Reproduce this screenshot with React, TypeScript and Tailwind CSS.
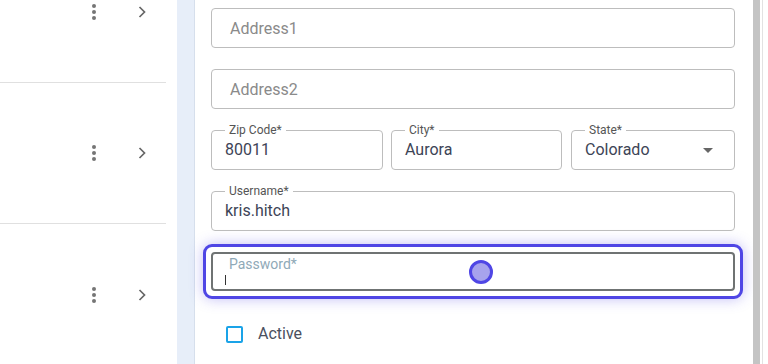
import React from "react"

function Kebab() {
  return (
    <div className="flex flex-col items-center gap-[2px]">
      <span className="block w-[4px] h-[4px] rounded-full bg-[#757575]" />
      <span className="block w-[4px] h-[4px] rounded-full bg-[#757575]" />
      <span className="block w-[4px] h-[4px] rounded-full bg-[#757575]" />
    </div>
  )
}

function Chevron() {
  return (
    <svg width="12" height="14" viewBox="0 0 12 14" fill="none">
      <path d="M3.5 2 L8.5 7 L3.5 12" stroke="#666" strokeWidth="1.7" />
    </svg>
  )
}

function ListRow({ last }: { last?: boolean }) {
  return (
    <div className={`h-[141px] flex items-center mr-[11px] ${last ? "" : "border-b border-[#e0e0e0]"}`}>
      <div className="flex-1" />
      <div className="w-[20px] flex justify-center mr-[32px]">
        <Kebab />
      </div>
      <div className="mr-[18px] flex items-center">
        <Chevron />
      </div>
    </div>
  )
}

function Outlined({ label, value, arrow, className }: { label: string; value: string; arrow?: boolean; className?: string }) {
  return (
    <div className={`relative h-10 border border-[#bdbdbd] rounded-[4px] ${className ?? ""}`}>
      <span className="absolute -top-[9px] left-[13px] px-[4px] bg-white text-[12px] leading-[16px] text-[#555]">{label}</span>
      <div className="h-full flex items-end pb-[9px] pl-[13px] pr-3">
        <span className="flex-1 text-[16px] leading-[20px] text-[#3d4456]">{value}</span>
        {arrow && (
          <svg width="12" height="6" viewBox="0 0 12 6" className="mb-[6px] mr-[8px]">
            <path d="M1 0 L11 0 L6 5 Z" fill="#666" />
          </svg>
        )}
      </div>
    </div>
  )
}

function Placeholder({ text }: { text: string }) {
  return (
    <div className="h-10 border border-[#bdbdbd] rounded-[4px] flex items-center pl-[18px] pt-[1px]">
      <span className="text-[16px] text-[#8a8a8a]">{text}</span>
    </div>
  )
}

export default function App() {
  return (
    <div className="flex h-[364px] w-[768px] overflow-hidden bg-white font-['Roboto',sans-serif]">
      <div className="w-[177px] shrink-0 bg-white">
        <div className="-mt-[58px]">
          <ListRow />
          <ListRow />
          <ListRow last />
        </div>
      </div>

      <div className="w-[18px] shrink-0 bg-[#e7eef9] border-r border-[#d6dfec]" />

      <div className="w-[558px] shrink-0 pt-2 pl-4 pr-[18px] flex flex-col">
        <Placeholder text="Address1" />
        <div className="mt-[21px]">
          <Placeholder text="Address2" />
        </div>
        <div className="mt-[21px] flex gap-2">
          <Outlined label="Zip Code*" value="80011" className="w-[172px]" />
          <Outlined label="City*" value="Aurora" className="w-[171px]" />
          <Outlined label="State*" value="Colorado" arrow className="flex-1 ml-[1px]" />
        </div>
        <Outlined label="Username*" value="kris.hitch" className="mt-[21px]" />

        <div className="mt-[13px] -mx-2 h-[55px] border-[3px] border-[#4f46e5] rounded-[9px] p-[5px] bg-white shadow-[0_0_14px_rgba(79,70,229,0.35)]">
          <div className="relative h-full border-2 border-[#6f7373] rounded-[4px] pl-[12px]">
            <div className="text-[14px] leading-[16px] text-[#8fa9b7] pt-[2px] pl-[4px]">Password*</div>
            <div className="w-[1px] h-[10px] bg-[#333] mt-[3px]" />
            <span className="absolute left-[256px] top-[6px] w-[24px] h-[24px] rounded-full bg-[#a7a3ed] border-[3px] border-[#4f46e5]" />
          </div>
        </div>

        <div className="mt-[23px] flex items-center pl-[15px]">
          <span className="w-[17px] h-[17px] border-2 border-[#1aa3e8] rounded-[2px]" />
          <span className="ml-[15px] text-[16px] text-[#4a5060]">Active</span>
        </div>
      </div>

      <div className="w-[7px] shrink-0 bg-[#c4c4c4]" />
      <div className="w-[2px] shrink-0 bg-white" />
      <div className="w-[1px] shrink-0 bg-[#e2e2e2]" />
      <div className="flex-1 bg-white" />
    </div>
  )
}
